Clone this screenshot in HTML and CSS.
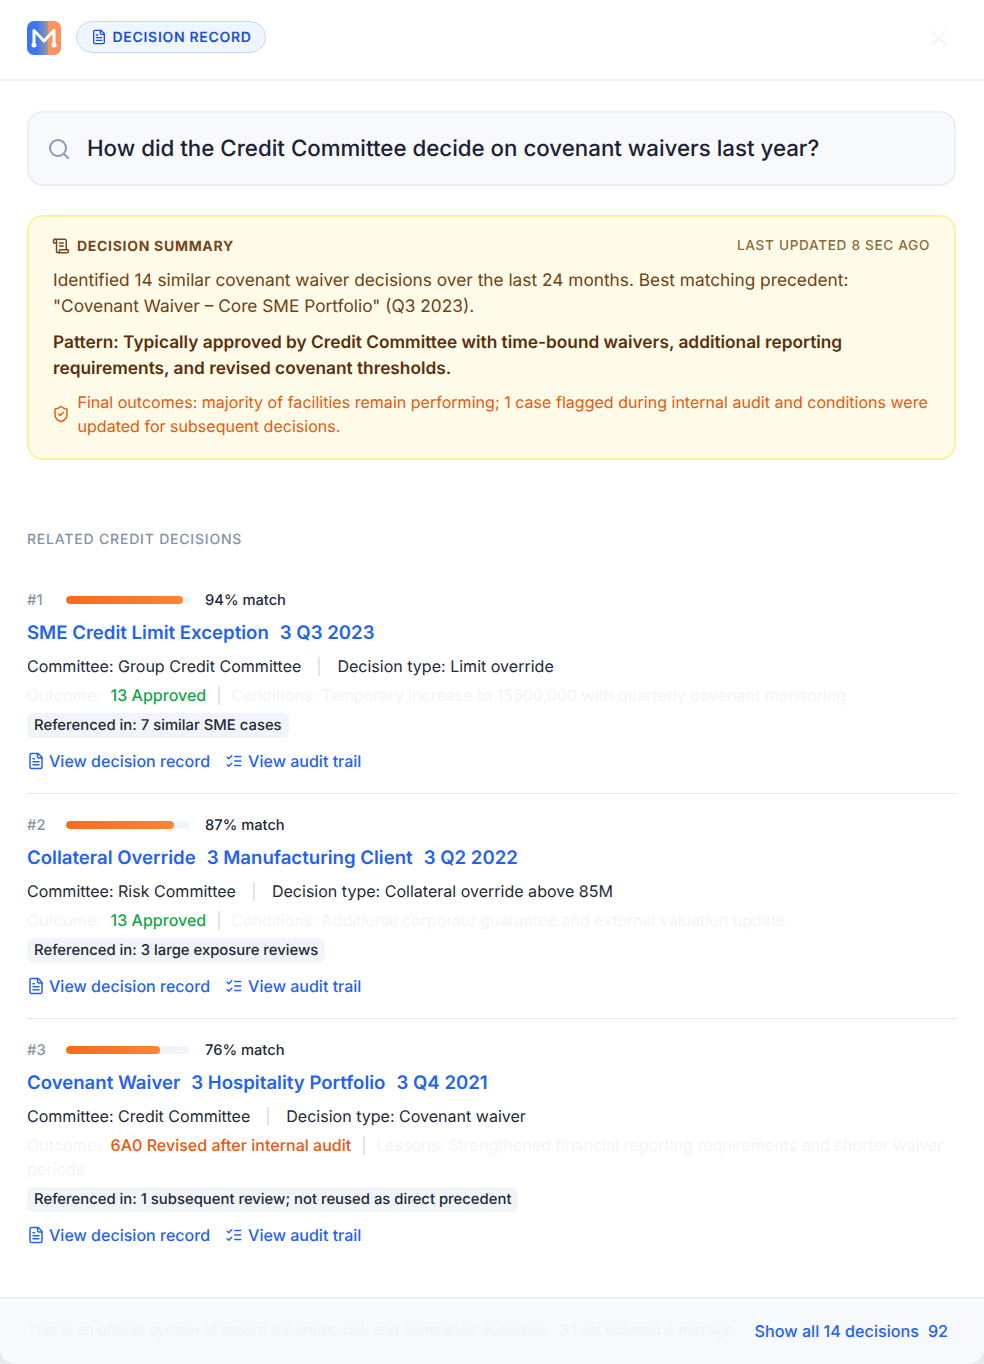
FILE: index.html
```html
<!DOCTYPE html>
<html lang="en">
<head>
<meta charset="utf-8">
<title>Decision Record</title>
<link rel="stylesheet" href="styles.css">
</head>
<body>
<svg class="defs" width="0" height="0" aria-hidden="true">
  <symbol id="doc" viewBox="0 0 24 24" fill="none" stroke="currentColor" stroke-width="2" stroke-linecap="round" stroke-linejoin="round">
    <path d="M15 2H6a2 2 0 0 0-2 2v16a2 2 0 0 0 2 2h12a2 2 0 0 0 2-2V7z"/><path d="M14 2v4a2 2 0 0 0 2 2h4"/><path d="M10 9H8"/><path d="M16 13H8"/><path d="M16 17H8"/>
  </symbol>
  <symbol id="list" viewBox="0 0 24 24" fill="none" stroke="currentColor" stroke-width="2" stroke-linecap="round" stroke-linejoin="round">
    <path d="m3 7 2 2 4-4"/><path d="m3 17 2 2 4-4"/><path d="M13 6h8"/><path d="M13 12h8"/><path d="M13 18h8"/>
  </symbol>
</svg>
<div class="modal">
  <header class="top">
    <div class="brand">
      <svg class="logo" viewBox="0 0 34 34" aria-hidden="true">
        <defs>
          <linearGradient id="lg" x1="0" x2="1" y1="0" y2="0">
            <stop offset="0.28" stop-color="#3b74f4"/>
            <stop offset="0.60" stop-color="#94979f"/>
            <stop offset="0.62" stop-color="#fb9361"/>
          </linearGradient>
        </defs>
        <rect width="34" height="34" rx="7" fill="url(#lg)"/>
        <path d="M7 24V9.500L17 20L27 9.500V24" fill="none" stroke="#fff" stroke-width="3" stroke-linejoin="round" stroke-linecap="round"/>
        <circle cx="7" cy="24" r="2.500" fill="#fff"/><circle cx="27" cy="24" r="2.500" fill="#fff"/>
      </svg>
      <span class="pill"><svg class="pill-icon"><use href="#doc"/></svg>DECISION RECORD</span>
    </div>
    <svg class="close" viewBox="0 0 16 16" aria-hidden="true"><path d="M1.500 1.500l13 13M14.500 1.500l-13 13" stroke="currentColor" stroke-width="2" stroke-linecap="round"/></svg>
  </header>

  <main class="content">
    <div class="search">
      <svg class="search-icon" viewBox="0 0 24 24" fill="none" stroke="currentColor" stroke-width="2" stroke-linecap="round" stroke-linejoin="round"><circle cx="11" cy="11" r="8"/><path d="m21 21-4.300-4.300"/></svg>
      <span>How did the Credit Committee decide on covenant waivers last year?</span>
    </div>

    <section class="summary">
      <div class="summary-head">
        <span class="summary-title">
          <svg class="scroll" viewBox="0 0 24 24" fill="none" stroke="currentColor" stroke-width="2" stroke-linecap="round" stroke-linejoin="round"><path d="M15 12h-5"/><path d="M15 8h-5"/><path d="M19 17V5a2 2 0 0 0-2-2H4"/><path d="M8 21h12a2 2 0 0 0 2-2v-1a1 1 0 0 0-1-1H11a1 1 0 0 0-1 1v1a2 2 0 1 1-4 0V5a2 2 0 1 0-4 0v2a1 1 0 0 0 1 1h3"/></svg>
          DECISION SUMMARY
        </span>
        <span class="updated">LAST UPDATED 8 SEC AGO</span>
      </div>
      <p class="summary-text">Identified 14 similar covenant waiver decisions over the last 24 months. Best matching precedent: "Covenant Waiver – Core SME Portfolio" (Q3 2023).</p>
      <p class="summary-pattern">Pattern: Typically approved by Credit Committee with time-bound waivers, additional reporting requirements, and revised covenant thresholds.</p>
      <div class="summary-final">
        <svg class="shield" viewBox="0 0 24 24" fill="none" stroke="currentColor" stroke-width="2" stroke-linecap="round" stroke-linejoin="round"><path d="M20 13c0 5-3.500 7.500-7.660 8.950a1 1 0 0 1-.67-.01C7.500 20.500 4 18 4 13V6a1 1 0 0 1 1-1c2 0 4.500-1.200 6.240-2.720a1.170 1.170 0 0 1 1.520 0C14.510 3.810 17 5 19 5a1 1 0 0 1 1 1z"/><path d="m9 12 2 2 4-4"/></svg>
        <p>Final outcomes: majority of facilities remain performing; 1 case flagged during internal audit and conditions were updated for subsequent decisions.</p>
      </div>
    </section>

    <h2 class="related">RELATED CREDIT DECISIONS</h2>

    <article class="item">
      <div class="match"><span class="rank">#1</span><span class="bar"><span class="fill" style="width:94%"></span></span><span class="pct">94% match</span></div>
      <h3 class="title">SME Credit Limit Exception<span class="gap"></span>3 Q3 2023</h3>
      <div class="meta">Committee: Group Credit Committee<span class="sep wide"></span>Decision type: Limit override</div>
      <div class="outcome"><span class="faint lbl">Outcome:</span><span class="ok">13 Approved</span><span class="sep"></span><span class="faint">Conditions: Temporary increase to 15500,000 with quarterly covenant monitoring</span></div>
      <div class="ref">Referenced in: 7 similar SME cases</div>
      <div class="links">
        <a class="link"><svg class="ico"><use href="#doc"/></svg>View decision record</a>
        <a class="link"><svg class="ico"><use href="#list"/></svg>View audit trail</a>
      </div>
    </article>

    <article class="item">
      <div class="match"><span class="rank">#2</span><span class="bar"><span class="fill" style="width:87%"></span></span><span class="pct">87% match</span></div>
      <h3 class="title">Collateral Override<span class="gap"></span>3 Manufacturing Client<span class="gap"></span>3 Q2 2022</h3>
      <div class="meta">Committee: Risk Committee<span class="sep wide"></span>Decision type: Collateral override above 85M</div>
      <div class="outcome"><span class="faint lbl">Outcome:</span><span class="ok">13 Approved</span><span class="sep"></span><span class="faint">Conditions: Additional corporate guarantee and external valuation update</span></div>
      <div class="ref">Referenced in: 3 large exposure reviews</div>
      <div class="links">
        <a class="link"><svg class="ico"><use href="#doc"/></svg>View decision record</a>
        <a class="link"><svg class="ico"><use href="#list"/></svg>View audit trail</a>
      </div>
    </article>

    <article class="item last">
      <div class="match"><span class="rank">#3</span><span class="bar"><span class="fill" style="width:76%"></span></span><span class="pct">76% match</span></div>
      <h3 class="title">Covenant Waiver<span class="gap"></span>3 Hospitality Portfolio<span class="gap"></span>3 Q4 2021</h3>
      <div class="meta">Committee: Credit Committee<span class="sep wide"></span>Decision type: Covenant waiver</div>
      <div class="outcome"><span class="faint lbl">Outcome:</span><span class="warn">6A0 Revised after internal audit</span><span class="sep"></span><span class="faint">Lessons: Strengthened financial reporting requirements and shorter waiver periods</span></div>
      <div class="ref">Referenced in: 1 subsequent review; not reused as direct precedent</div>
      <div class="links">
        <a class="link"><svg class="ico"><use href="#doc"/></svg>View decision record</a>
        <a class="link"><svg class="ico"><use href="#list"/></svg>View audit trail</a>
      </div>
    </article>
  </main>

  <footer class="foot">
    <span class="foot-note">This is an official system of record for credit, risk and committee decisions.<span class="gap-n"></span>3 Last indexed 5 min ago.</span>
    <a class="foot-link">Show all 14 decisions<span class="gap-s"></span>92</a>
  </footer>
</div>
</body>
</html>
```
FILE: styles.css
```css
* { box-sizing: border-box; }
html, body { margin: 0; padding: 0; }
body {
  width: 984px;
  height: 1364px;
  overflow: hidden;
  background: #e9eaec;
  font-family: Inter, "Liberation Sans", sans-serif;
  color: #111827;
  text-rendering: geometricPrecision;
}
.defs { position: absolute; }
.modal {
  height: 1364px;
  display: flex;
  flex-direction: column;
  background: #fff;
  border-radius: 0 0 16px 16px;
  overflow: hidden;
}
.top {
  height: 81px;
  flex: none;
  display: flex;
  align-items: center;
  justify-content: space-between;
  padding: 0 37px 3px 27px;
  border-bottom: 2px solid #f1f2f4;
}
.brand { display: flex; align-items: flex-start; gap: 15px; }
.logo { width: 34px; height: 34px; display: block; }
.pill {
  display: inline-flex;
  align-items: center;
  gap: 6px;
  height: 32px;
  padding: 0 13.500px;
  border: 1px solid #bfdbfe;
  border-radius: 17px;
  background: #eff6ff;
  color: #1d4ed8;
  font-size: 14px;
  font-weight: 600;
  letter-spacing: 0.7px;
}
.pill-icon { width: 16px; height: 16px; }
.close { width: 16px; height: 16px; color: #f3f4f6; }

.content {
  flex: 1;
  padding: 30px 28px 0 27px;
}
.search {
  height: 75px;
  display: flex;
  align-items: center;
  gap: 16px;
  padding: 0 18px;
  border: 2px solid #eceef2;
  border-radius: 16px;
  background: #f8f9fc;
  font-size: 22.300px;
  font-weight: 500;
  color: #1a2233;
}
.search-icon { width: 24px; height: 24px; color: #8a9bb3; flex: none; }

.summary {
  margin-top: 29px;
  height: 245px;
  padding: 20px 24px 0 24px;
  border: 2px solid #fdf0a0;
  border-radius: 16px;
  background: #fefce8;
  color: #713f12;
}
.summary-head { display: flex; justify-content: space-between; align-items: center; height: 18px; }
.summary-title {
  display: inline-flex;
  align-items: center;
  gap: 7px;
  font-size: 14px;
  font-weight: 700;
  letter-spacing: 0.7px;
  color: #78461c;
}
.scroll { width: 18px; height: 18px; margin-left: -1px; }
.updated { font-size: 13.600px; font-weight: 500; letter-spacing: 0.680px; color: #8a6a3d; }
.summary-text { margin: 13px 0 0; font-size: 17.300px; line-height: 26px; }
.summary-pattern { margin: 10px 0 0; font-size: 17.300px; line-height: 26px; font-weight: 600; color: #5b2f0c; }
.summary-final {
  margin-top: 8px;
  display: flex;
  align-items: center;
  gap: 7.500px;
  color: #ea580c;
}
.summary-final p { margin: 0; font-size: 16.060px; line-height: 24px; }
.shield { width: 18px; height: 18px; flex: none; margin-left: -1px; }

.related {
  margin: 71px 0 0;
  font-size: 14px;
  line-height: 17px;
  font-weight: 500;
  letter-spacing: 0.800px;
  color: #8592a6;
}

.item {
  margin-top: 43px;
  height: 203px;
  border-bottom: 1px solid #e5e7eb;
}
.item + .item { margin-top: 22px; }
.item.last { border-bottom: 0; }
.match { display: flex; align-items: center; height: 17px; font-size: 14.700px; }
.rank { width: 39px; font-weight: 500; color: #8592a6; }
.bar { width: 124px; height: 8px; border-radius: 4px; background: #f1f5f9; overflow: hidden; }
.fill { display: block; height: 100%; border-radius: 4px; background: linear-gradient(90deg, #f96a1c, #fb8534); }
.pct { margin-left: 15px; font-weight: 500; color: #1f2937; }
.title {
  margin: 11px 0 0;
  font-size: 18.600px;
  line-height: 28px;
  font-weight: 600;
  color: #2563eb;
}
.gap { display: inline-block; width: 11px; }
.gap-s { display: inline-block; width: 9px; }
.gap-n { display: inline-block; width: 8px; }
.meta { margin-top: 7px; font-size: 16.050px; line-height: 24px; color: #1f2937; }
.outcome { margin-top: 5px; font-size: 16.050px; line-height: 24px; }
.faint { color: #f3f4f6; }
.lbl { margin-right: 10px; }
.ok { color: #16a34a; font-weight: 500; }
.warn { color: #ea580c; font-weight: 500; }
.sep {
  display: inline-block;
  width: 2px;
  height: 19px;
  margin: 0 11.500px;
  vertical-align: -4px;
  background: #e2e5ea;
}
.sep.wide { margin: 0 17px; }
.ref {
  display: table;
  margin-top: 6px;
  padding: 0 7px;
  height: 25px;
  line-height: 25px;
  border-radius: 6px;
  background: #f1f5f9;
  font-size: 14.850px;
  font-weight: 500;
  color: #1f2937;
}
.links { display: flex; gap: 15px; margin-top: 11px; }
.link {
  display: inline-flex;
  align-items: center;
  gap: 4px;
  font-size: 16.050px;
  line-height: 24px;
  font-weight: 500;
  color: #2563eb;
}
.link + .link { gap: 5px; }
.ico { width: 18px; height: 18px; }

.foot {
  height: 67px;
  flex: none;
  display: flex;
  align-items: center;
  justify-content: space-between;
  padding: 0 36px 0 27px;
  border-top: 2px solid #eceef0;
  background: #f8f9fc;
  font-size: 16.150px;
}
.foot-note { color: #f3f4f6; font-size: 14.800px; white-space: nowrap; padding-bottom: 3px; }
.foot-link { color: #2563eb; font-weight: 500; white-space: nowrap; padding-bottom: 1px; }
```
